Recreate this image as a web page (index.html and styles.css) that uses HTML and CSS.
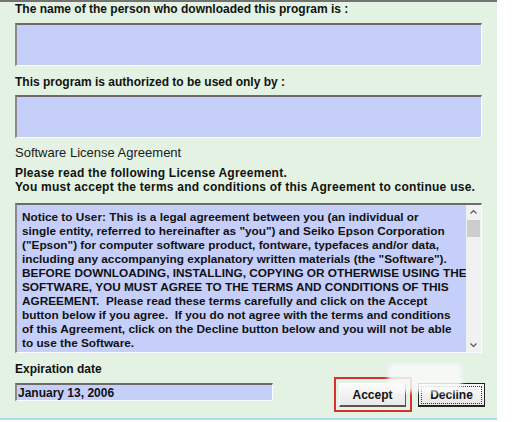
FILE: index.html
```html
<!DOCTYPE html>
<html lang="en">
<head>
    <meta charset="UTF-8">
    <title>License Agreement</title>
    <link rel="stylesheet" href="styles.css">
</head>
<body>
    <div class="panel">
        <div class="label first">The name of the person who downloaded this program is :</div>
        <div class="field big"></div>

        <div class="label">This program is authorized to be used only by :</div>
        <div class="field big second"></div>

        <div class="caption">Software License Agreement</div>
        <div class="label intro">Please read the following License Agreement.<br>You must accept the terms and conditions of this Agreement to continue use.</div>

        <div class="field terms">
            <div class="terms-text">Notice to User: This is a legal agreement between you (an individual or<br>
single entity, referred to hereinafter as "you") and Seiko Epson Corporation<br>
("Epson") for computer software product, fontware, typefaces and/or data,<br>
including any accompanying explanatory written materials (the "Software").<br>
BEFORE DOWNLOADING, INSTALLING, COPYING OR OTHERWISE USING THE<br>
SOFTWARE, YOU MUST AGREE TO THE TERMS AND CONDITIONS OF THIS<br>
AGREEMENT.&nbsp; Please read these terms carefully and click on the Accept<br>
button below if you agree.&nbsp; If you do not agree with the terms and conditions<br>
of this Agreement, click on the Decline button below and you will not be able<br>
to use the Software.</div>
            <div class="scrollbar">
                <svg class="arrow" width="15" height="14" viewBox="0 0 15 14"><path d="M4.5 8.5 L7.5 5.5 L10.5 8.5" fill="none" stroke="#555" stroke-width="1.2"/></svg>
                <div class="thumb"></div>
                <div class="track"></div>
                <svg class="arrow" width="15" height="14" viewBox="0 0 15 14"><path d="M4.5 5.5 L7.5 8.5 L10.5 5.5" fill="none" stroke="#555" stroke-width="1.2"/></svg>
            </div>
        </div>

        <div class="label expire">Expiration date</div>
        <div class="bottom-row">
            <div class="field date">January 13, 2006</div>
            <span class="highlight"><button class="btn">Accept</button></span>
            <button class="btn focused"><span class="focus-ring">Decline</span></button>
        </div>
        <div class="smudge"></div>
    </div>
</body>
</html>
```

FILE: styles.css
```css
body {
    margin: 0;
    background: #fff;
    font-family: "Liberation Sans", Arial, sans-serif;
    color: #111;
}
.panel {
    position: relative;
    width: 482px;
    height: 416px;
    padding: 0 0 0 15px;
    background: #e3f2e3;
    border-top: 2px solid #737373;
    border-bottom: 2px solid #a3dfee;
}
.label {
    font-size: 12px;
    font-weight: bold;
    line-height: 14px;
}
.field {
    width: 464px;
    background: #c6cffa;
    border-top: 2px solid #6b6b6b;
    border-left: 2px solid #8a8a8a;
    border-right: 1px solid #fafcff;
    border-bottom: 1px solid #fafcff;
}
.big {
    height: 40px;
    margin: 7px 0 9px;
}
.second {
    margin: 6px 0 8px;
}
.caption {
    font-size: 13px;
    line-height: 14px;
    color: #1a1a1a;
    margin-bottom: 6px;
}
.intro {
    letter-spacing: 0.25px;
    margin-bottom: 9px;
}
.terms {
    display: flex;
    height: 147px;
    margin-bottom: 9px;
}
.terms-text {
    flex: 1;
    padding: 5px 0 0 5px;
    font-size: 11.8px;
    font-weight: bold;
    line-height: 14px;
    white-space: nowrap;
    overflow: hidden;
}
.scrollbar {
    width: 15px;
    display: flex;
    flex-direction: column;
    background: #f1f1f1;
}
.thumb {
    height: 17px;
    margin: 1px 1px 0;
    background: #cdcdcd;
}
.track {
    flex: 1;
}
.expire {
    margin-bottom: 7px;
}
.bottom-row {
    display: flex;
    align-items: flex-start;
}
.date {
    width: 254px;
    height: 15px;
    padding-left: 1px;
    font-size: 12px;
    font-weight: bold;
    line-height: 16px;
}
.highlight {
    margin: -6px 0 0 61px;
    padding: 4px 4px 3px 3px;
    border: 2px solid #d8302e;
}
.btn {
    display: block;
    width: 67px;
    height: 24px;
    padding: 0;
    font-family: "Liberation Sans", Arial, sans-serif;
    font-size: 12px;
    font-weight: bold;
    color: #111;
    background: linear-gradient(#fbfbfb, #e8e8e8);
    border: 1px solid #fff;
    border-right-color: #555;
    border-bottom: 2px solid #555;
}
.focused {
    margin-left: 6px;
    padding: 2px;
    border: 1px solid #222;
    border-bottom-width: 2px;
}
.focus-ring {
    display: block;
    height: 16px;
    line-height: 16px;
    border: 1px dotted #333;
}
/* pale blot over the buttons */
.smudge {
    position: absolute;
    left: 388px;
    top: 362px;
    width: 74px;
    height: 28px;
    border-radius: 8px;
    background: #fafafa;
    opacity: 0.85;
    filter: blur(2px);
}
```
